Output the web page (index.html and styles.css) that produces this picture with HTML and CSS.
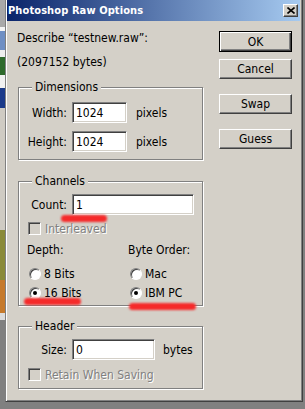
FILE: index.html
```html
<!DOCTYPE html>
<html lang="en">
<head>
    <meta charset="UTF-8">
    <title>Photoshop Raw Options</title>
    <link rel="stylesheet" href="styles.css">
</head>
<body>

    <div class="screen">
        <div class="desk">
            <span class="d-grey"></span>
            <span class="d-white"></span>
            <span class="d-blue"></span>
            <span class="d-white2"></span>
            <span class="d-green"></span>
            <span class="d-white3"></span>
            <span class="d-navy"></span>
            <span class="d-light"></span>
            <span class="d-olive"></span>
            <span class="d-orange"></span>
            <span class="d-white4"></span>
        </div>

        <div class="window">
            <div class="titlebar">
                <span class="title">Photoshop Raw Options</span>
                <span class="close">
                    <svg width="8" height="7" viewBox="0 0 8 7"><path d="M0.5 0.5 L7.5 6.5 M7.5 0.5 L0.5 6.5" stroke="#000" stroke-width="1.6"/></svg>
                </span>
            </div>

            <div class="content">
                <div class="main">
                    <div class="line">Describe “testnew.raw”:</div>
                    <div class="line">(2097152 bytes)</div>

                    <fieldset class="group dims">
                        <legend>Dimensions</legend>
                        <div class="row">
                            <span class="label">Width:</span>
                            <input class="field w-small" type="text" value="1024">
                            <span class="unit">pixels</span>
                        </div>
                        <div class="row">
                            <span class="label">Height:</span>
                            <input class="field w-small" type="text" value="1024">
                            <span class="unit">pixels</span>
                        </div>
                    </fieldset>

                    <fieldset class="group channels">
                        <legend>Channels</legend>
                        <div class="row">
                            <span class="label">Count:</span>
                            <input class="field w-wide" type="text" value="1">
                        </div>
                        <div class="check-row">
                            <span class="check"></span>
                            <span class="disabled">Interleaved</span>
                        </div>
                        <div class="opts">
                            <div class="opt-col">
                                <div class="opt-head">Depth:</div>
                                <div class="radio-row"><span class="radio"></span>8 Bits</div>
                                <div class="radio-row"><span class="radio on"></span>16 Bits</div>
                            </div>
                            <div class="opt-col">
                                <div class="opt-head">Byte Order:</div>
                                <div class="radio-row"><span class="radio"></span>Mac</div>
                                <div class="radio-row"><span class="radio on"></span>IBM PC</div>
                            </div>
                        </div>
                    </fieldset>

                    <fieldset class="group header">
                        <legend>Header</legend>
                        <div class="row">
                            <span class="label">Size:</span>
                            <input class="field w-mid" type="text" value="0">
                            <span class="unit bytes">bytes</span>
                        </div>
                        <div class="check-row">
                            <span class="check"></span>
                            <span class="disabled">Retain When Saving</span>
                        </div>
                    </fieldset>
                </div>

                <div class="buttons">
                    <button class="btn default">OK</button>
                    <button class="btn cancel">Cancel</button>
                    <button class="btn gap">Swap</button>
                    <button class="btn gap">Guess</button>
                </div>
            </div>

            <!-- red marker strokes drawn over the dialog -->
            <span class="mark mark-count"></span>
            <span class="mark mark-depth"></span>
            <span class="mark mark-order"></span>
        </div>
    </div>

</body>
</html>
```

FILE: styles.css
```css
* { box-sizing: border-box; }
body { margin: 0; background-color: #808080; font-family: "DejaVu Sans Condensed", "Liberation Sans", sans-serif; font-size: 12px; color: #000; }
.screen { display: flex; align-items: flex-start; width: 305px; height: 409px; overflow: hidden; }

/* desktop showing to the left of the dialog */
.desk { width: 5px; flex-shrink: 0; display: flex; flex-direction: column; }
.desk span { display: block; }
.d-grey { height: 27px; background-color: #a9a9a9; }
.d-white { height: 4px; background-color: #f4f4f4; }
.d-blue { height: 19px; background-color: #6f8fc4; }
.d-white2 { height: 7px; background-color: #eeeeee; }
.d-green { height: 18px; background-color: #2e6a2c; }
.d-white3 { height: 13px; background-color: #f2f2f2; }
.d-navy { height: 20px; background-color: #1b3a8a; }
.d-light { height: 122px; background-color: #cfcbc3; }
.d-olive { height: 50px; background-color: #8a8a38; }
.d-orange { height: 33px; background-color: #c67a2c; }
.d-white4 { height: 7px; background-color: #dcdcdc; }

/* dialog window */
.window { position: relative; flex-shrink: 0; width: 298px; height: 402px; background-color: #d4d0c8; border-left: 1px solid #808080; border-right: 1px solid #404040; border-bottom: 1px solid #404040; box-shadow: inset 1px 0 #fff, inset -1px -1px #808080; padding: 0 2px 0 1px; }
.titlebar { height: 21px; display: flex; align-items: center; justify-content: space-between; padding: 0 2px 0 1px; background: linear-gradient(to right, #0a246a, #a6caf0); }
.title { color: #fff; font-weight: bold; font-size: 11px; letter-spacing: 0.1px; }
.close { width: 15px; height: 13px; display: flex; align-items: center; justify-content: center; background-color: #d4d0c8; border: 1px solid; border-color: #fff #404040 #404040 #fff; box-shadow: inset -1px -1px #808080; }

.content { display: flex; gap: 16px; padding-left: 10px; }
.main { width: 186px; padding-top: 5px; }
.line { height: 24px; line-height: 24px; white-space: nowrap; }

/* group boxes */
.group { width: 185px; margin: 0 0 0 1px; padding: 0 0 7px 0; min-width: 0; border: 1px solid #808080; box-shadow: inset 1px 1px #fff, 1px 1px #fff; }
.group legend { margin-left: 13px; padding: 0 3px; line-height: 15px; background-color: #d4d0c8; }
.dims { margin-top: 6px; }
.channels { margin-top: 14px; padding-bottom: 3px; }
.header { margin-top: 13px; }

.row { display: flex; align-items: center; height: 21px; margin-top: 5px; }
.dims .row { margin-top: 7px; }
.dims .row + .row { margin-top: 8px; }
.label { width: 48px; margin-right: 5px; text-align: right; }
.unit { margin-left: 9px; }
.unit.bytes { margin-left: 8px; }

.field { height: 21px; padding: 0 3px; font: inherit; color: #000; background-color: #fff; border: 1px solid; border-color: #808080 #fff #fff #808080; box-shadow: inset 1px 1px #404040, inset -1px -1px #d4d0c8; outline: none; }
.w-small { width: 55px; }
.w-wide { width: 122px; }
.w-mid { width: 83px; }

.check-row { display: flex; align-items: center; height: 13px; margin-top: 7px; padding-left: 9px; }
.header .check-row { margin-top: 8px; }
.check { width: 13px; height: 13px; margin-right: 4px; background-color: #d4d0c8; border: 1px solid; border-color: #808080 #fff #fff #808080; box-shadow: inset 1px 1px #404040, inset -1px -1px #d4d0c8; }
.disabled { color: #808080; text-shadow: 1px 1px #fff; }

.opts { display: grid; grid-template-columns: 101px 1fr; margin-top: 8px; padding-left: 8px; }
.opt-head { line-height: 15px; }
.radio-row { display: flex; align-items: center; height: 19px; }
.opt-head + .radio-row { margin-top: 6px; }
.radio { position: relative; width: 12px; height: 12px; margin: 0 3px 0 2px; border-radius: 50%; background-color: #fff; border: 1px solid; border-color: #808080 #fff #fff #808080; box-shadow: inset 1px 1px #404040; }
.radio.on::after { content: ""; position: absolute; left: 3px; top: 3px; width: 4px; height: 4px; border-radius: 50%; background-color: #000; }

/* buttons */
.buttons { width: 73px; padding-top: 10px; display: flex; flex-direction: column; }
.btn { height: 20px; padding: 0; font: inherit; color: #000; background-color: #d4d0c8; border: 1px solid; border-color: #fff #404040 #404040 #fff; box-shadow: inset -1px -1px #808080; }
.btn.default { height: 21px; border-color: #000; box-shadow: inset 1px 1px #fff, inset -1px -1px #404040, inset -2px -2px #808080; }
.btn.cancel { margin-top: 7px; }
.btn.gap { margin-top: 15px; }

/* red marker */
.mark { position: absolute; display: block; background-color: #f52a2a; border-radius: 4px; filter: blur(1.3px); }
.mark-count { left: 55px; top: 215px; width: 46px; height: 7px; }
.mark-depth { left: 18px; top: 298px; width: 57px; height: 7px; }
.mark-order { left: 123px; top: 303px; width: 67px; height: 7px; }
```
